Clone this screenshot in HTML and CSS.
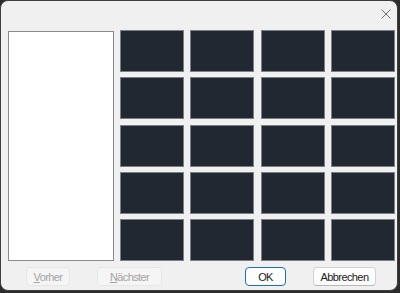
FILE: index.html
```html
<!DOCTYPE html>
<html lang="de">
<head>
 <meta charset="UTF-8">
 <title>Bild auswählen</title>
 <link rel="stylesheet" href="styles.css">
</head>
<body>
<div class="window">
 <div class="titlebar">
   <button class="close" title="Schließen">
     <svg width="10" height="10" viewBox="0 0 10 10"><path d="M0.5 0.5 L9.5 9.5 M9.5 0.5 L0.5 9.5" stroke="#707070" stroke-width="1" fill="none"/></svg>
   </button>
 </div>
 <div class="content">
   <div class="listbox"></div>
   <div class="tiles">
     <div class="tile"></div><div class="tile"></div><div class="tile"></div><div class="tile"></div>
     <div class="tile"></div><div class="tile"></div><div class="tile"></div><div class="tile"></div>
     <div class="tile"></div><div class="tile"></div><div class="tile"></div><div class="tile"></div>
     <div class="tile"></div><div class="tile"></div><div class="tile"></div><div class="tile"></div>
     <div class="tile"></div><div class="tile"></div><div class="tile"></div><div class="tile"></div>
   </div>
 </div>
 <div class="buttons">
   <button class="btn disabled prev" disabled><u>V</u>orher</button>
   <button class="btn disabled next" disabled><u>N</u>ächster</button>
   <button class="btn default ok">OK</button>
   <button class="btn cancel">Abbrechen</button>
 </div>
</div>
</body>
</html>
```

FILE: styles.css
```css
body {
  margin: 0;
  padding: 0;
  background-color: #2c2c2c;
  font-family: "Liberation Sans", Arial, sans-serif;
}
.window {
  box-sizing: border-box;
  width: 398px;
  height: 291px;
  background-color: #f0f0f0;
  border: 1px solid #3e3e3e;
  border-radius: 8px;
  overflow: hidden;
}
.titlebar {
  height: 29px;
  display: flex;
  justify-content: flex-end;
}
.close {
  border: none;
  background: none;
  padding: 0;
  margin: 8px 6px 0 0;
  width: 10px;
  height: 10px;
  display: flex;
}
.content {
  display: flex;
  padding-left: 7px;
  height: 231px;
}
.listbox {
  box-sizing: border-box;
  width: 106px;
  height: 230px;
  margin-top: 1px;
  background-color: #ffffff;
  border: 1px solid #8a8a8a;
}
.tiles {
  margin-left: 6px;
  width: 275px;
  display: grid;
  grid-template-columns: repeat(4, 1fr);
  grid-template-rows: repeat(5, 1fr);
  column-gap: 6.33px;
  row-gap: 5.25px;
}
.tile {
  background-color: #222831;
  border: 1px solid #7c7f84;
}
.buttons {
  display: flex;
  margin-top: 6px;
  padding-left: 25px;
}
.btn {
  box-sizing: border-box;
  height: 19px;
  padding: 0;
  font-family: "Liberation Sans", Arial, sans-serif;
  font-size: 11px;
  letter-spacing: -0.6px;
  border-radius: 4px;
  color: #1b1b1b;
  background-color: #fdfdfd;
  border: 1px solid #d2d2d2;
  border-bottom-color: #b8b8b8;
}
.btn u {
  text-decoration: underline;
}
.disabled {
  color: #a3a3a3;
  background-color: #f5f5f5;
  border: 1px solid #e6e6e6;
}
.prev {
  width: 44px;
}
.next {
  width: 65px;
  margin-left: 27px;
}
.ok {
  width: 41px;
  margin-left: 83px;
  border: 1.5px solid #1a6fc4;
}
.cancel {
  width: 63px;
  margin-left: 27px;
}
```
